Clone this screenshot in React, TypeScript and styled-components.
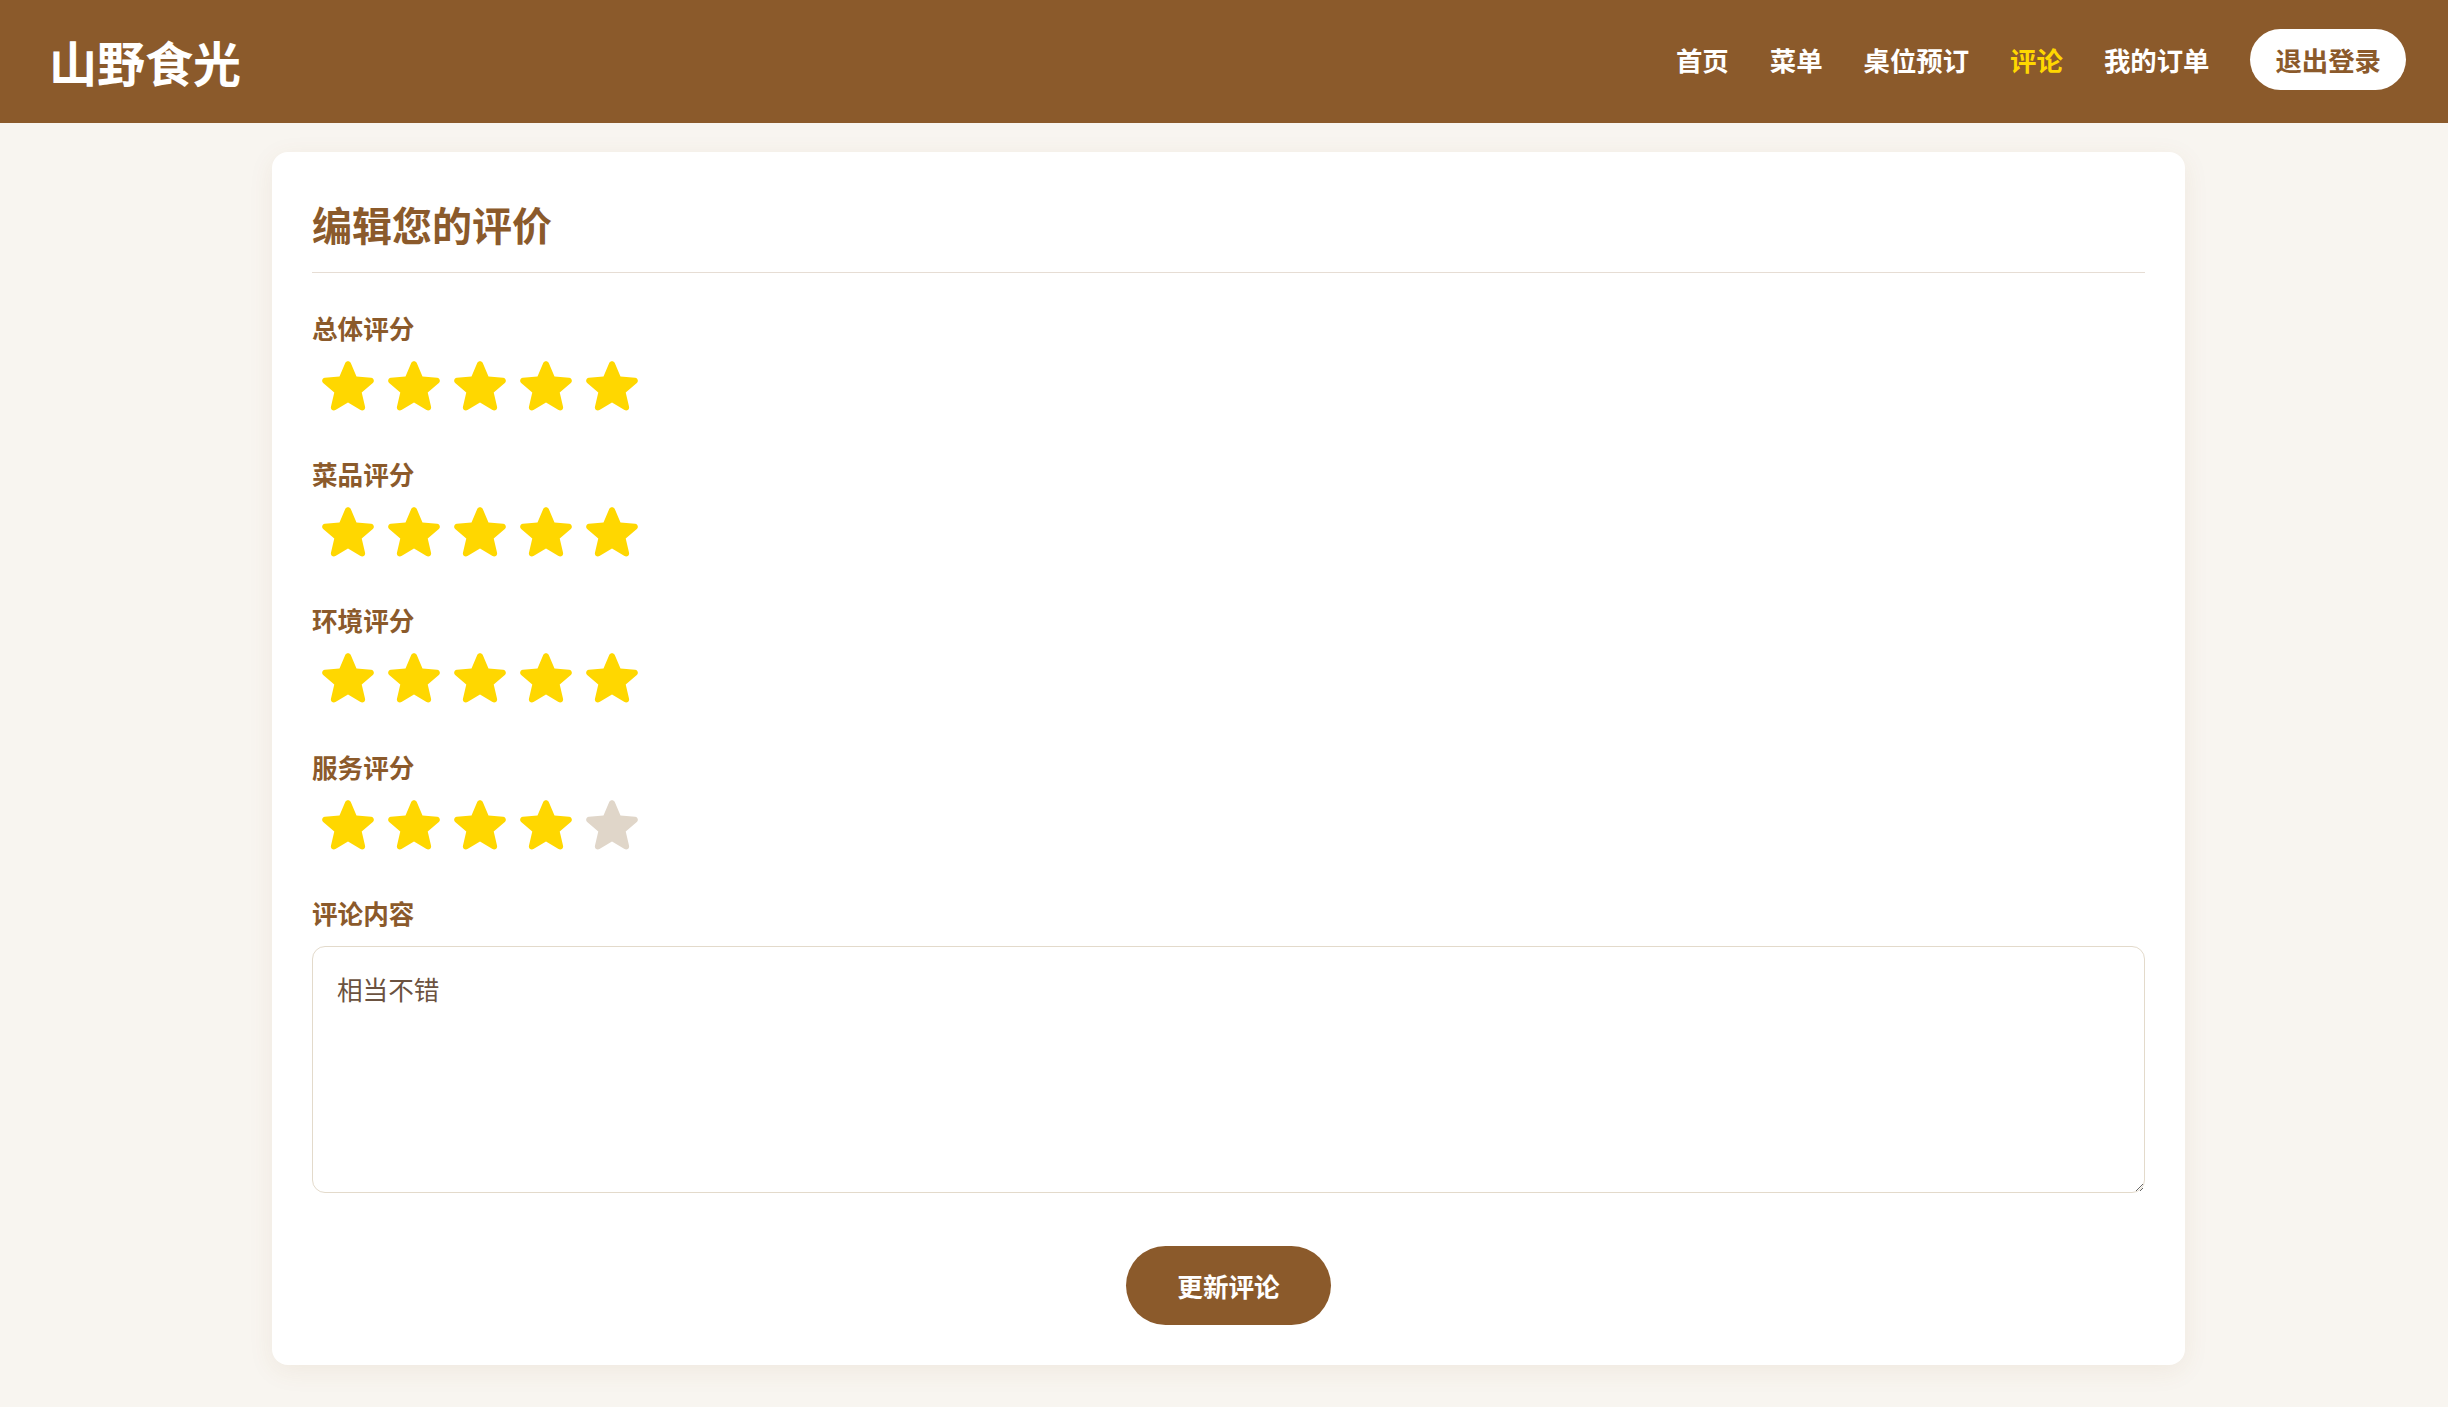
import React from "react";
import styled, { createGlobalStyle } from "styled-components";

const GlobalStyle = createGlobalStyle`
  html, body {
    margin: 0;
    padding: 0;
    background: #f8f5f0;
    font-family: "Noto Sans CJK SC", "Noto Sans", sans-serif;
  }
  * { box-sizing: border-box; }
`;

const Header = styled.header`
  height: 123px;
  background: #8b5a2b;
  display: flex;
  align-items: center;
  justify-content: space-between;
  padding: 0 42px 0 49px;
`;

const Logo = styled.div`
  color: #ffffff;
  font-size: 48px;
  font-weight: 700;
  line-height: 1;
  margin-top: -1px;
`;

const Nav = styled.nav`
  display: flex;
  align-items: center;
  gap: 41px;
  margin-top: -4px;
`;

const NavLink = styled.a<{ $active?: boolean }>`
  color: ${(p) => (p.$active ? "#ffd700" : "#ffffff")};
  font-size: 26.4px;
  font-weight: 700;
  line-height: 41px;
  text-decoration: none;
  cursor: pointer;
`;

const LogoutButton = styled.button`
  background: #ffffff;
  color: #8b5a2b;
  border: none;
  border-radius: 999px;
  font-family: inherit;
  font-size: 26.4px;
  font-weight: 700;
  line-height: 41px;
  padding: 10px 25px;
  cursor: pointer;
`;

const Main = styled.main`
  display: flex;
  justify-content: center;
  padding: 29px 0 36px 9px;
`;

const Card = styled.section`
  width: 1913px;
  background: #ffffff;
  border-radius: 16px;
  padding: 40px;
  box-shadow: 0 6px 26px rgba(139, 90, 43, 0.08);
`;

const Title = styled.h2`
  margin: 0 0 33.5px;
  color: #8b5a2b;
  font-size: 40px;
  font-weight: 700;
  line-height: 64px;
  padding-bottom: 16px;
  border-bottom: 1.6px solid #e6ddd4;
`;

const Group = styled.div<{ $last?: boolean }>`
  display: flex;
  flex-direction: column;
  margin-bottom: ${(p) => (p.$last ? "53.3px" : "42.4px")};
`;

const Label = styled.label`
  color: #8b5a2b;
  font-size: 25.6px;
  font-weight: 700;
  line-height: 41px;
  margin-bottom: 13px;
`;

const StarRow = styled.div`
  display: flex;
  gap: 14px;
  padding-left: 10px;
`;

const StarSvg = styled.svg<{ $filled: boolean }>`
  display: block;
  width: 52px;
  height: 50px;
  fill: ${(p) => (p.$filled ? "#ffd700" : "#e0d6c9")};
  cursor: pointer;
`;

const TextArea = styled.textarea`
  display: block;
  width: 100%;
  height: 246.5px;
  border: 1.3px solid #e3dacb;
  border-radius: 13px;
  padding: 21px 24px;
  font-family: "Noto Sans CJK SC", "Noto Sans", sans-serif;
  font-size: 25.6px;
  line-height: 41px;
  color: #6b5240;
  resize: vertical;
  outline: none;
  background: #ffffff;
`;

const ButtonRow = styled.div`
  display: flex;
  justify-content: center;
`;

const SubmitButton = styled.button`
  background: #8b5a2b;
  color: #ffffff;
  border: none;
  border-radius: 999px;
  font-family: inherit;
  font-size: 25.6px;
  font-weight: 700;
  line-height: 41px;
  padding: 19px 51px;
  cursor: pointer;
`;

const STAR_PATH =
  "M12 17.27l4.15 2.51c.76.46 1.69-.22 1.49-1.08l-1.1-4.72 3.67-3.18c.67-.58.31-1.68-.57-1.75l-4.83-.41-1.89-4.46c-.34-.81-1.5-.81-1.84 0L9.19 8.63l-4.83.41c-.88.07-1.24 1.17-.57 1.75l3.67 3.18-1.1 4.72c-.2.86.73 1.54 1.49 1.08l4.15-2.5z";

function Stars({ value }: { value: number }) {
  return (
    <StarRow>
      {[1, 2, 3, 4, 5].map((i) => (
        <StarSvg
          key={i}
          $filled={i <= value}
          viewBox="3.4 3.5 17.2 16.6"
          preserveAspectRatio="none"
        >
          <path d={STAR_PATH} />
        </StarSvg>
      ))}
    </StarRow>
  );
}

const ratings = [
  { label: "总体评分", value: 5 },
  { label: "菜品评分", value: 5 },
  { label: "环境评分", value: 5 },
  { label: "服务评分", value: 4 },
];

export default function App() {
  return (
    <>
      <GlobalStyle />
      <Header>
        <Logo>山野食光</Logo>
        <Nav>
          <NavLink>首页</NavLink>
          <NavLink>菜单</NavLink>
          <NavLink>桌位预订</NavLink>
          <NavLink $active>评论</NavLink>
          <NavLink>我的订单</NavLink>
          <LogoutButton>退出登录</LogoutButton>
        </Nav>
      </Header>
      <Main>
        <Card>
          <Title>编辑您的评价</Title>
          {ratings.map((r) => (
            <Group key={r.label}>
              <Label>{r.label}</Label>
              <Stars value={r.value} />
            </Group>
          ))}
          <Group $last>
            <Label>评论内容</Label>
            <TextArea defaultValue="相当不错" />
          </Group>
          <ButtonRow>
            <SubmitButton>更新评论</SubmitButton>
          </ButtonRow>
        </Card>
      </Main>
    </>
  );
}
